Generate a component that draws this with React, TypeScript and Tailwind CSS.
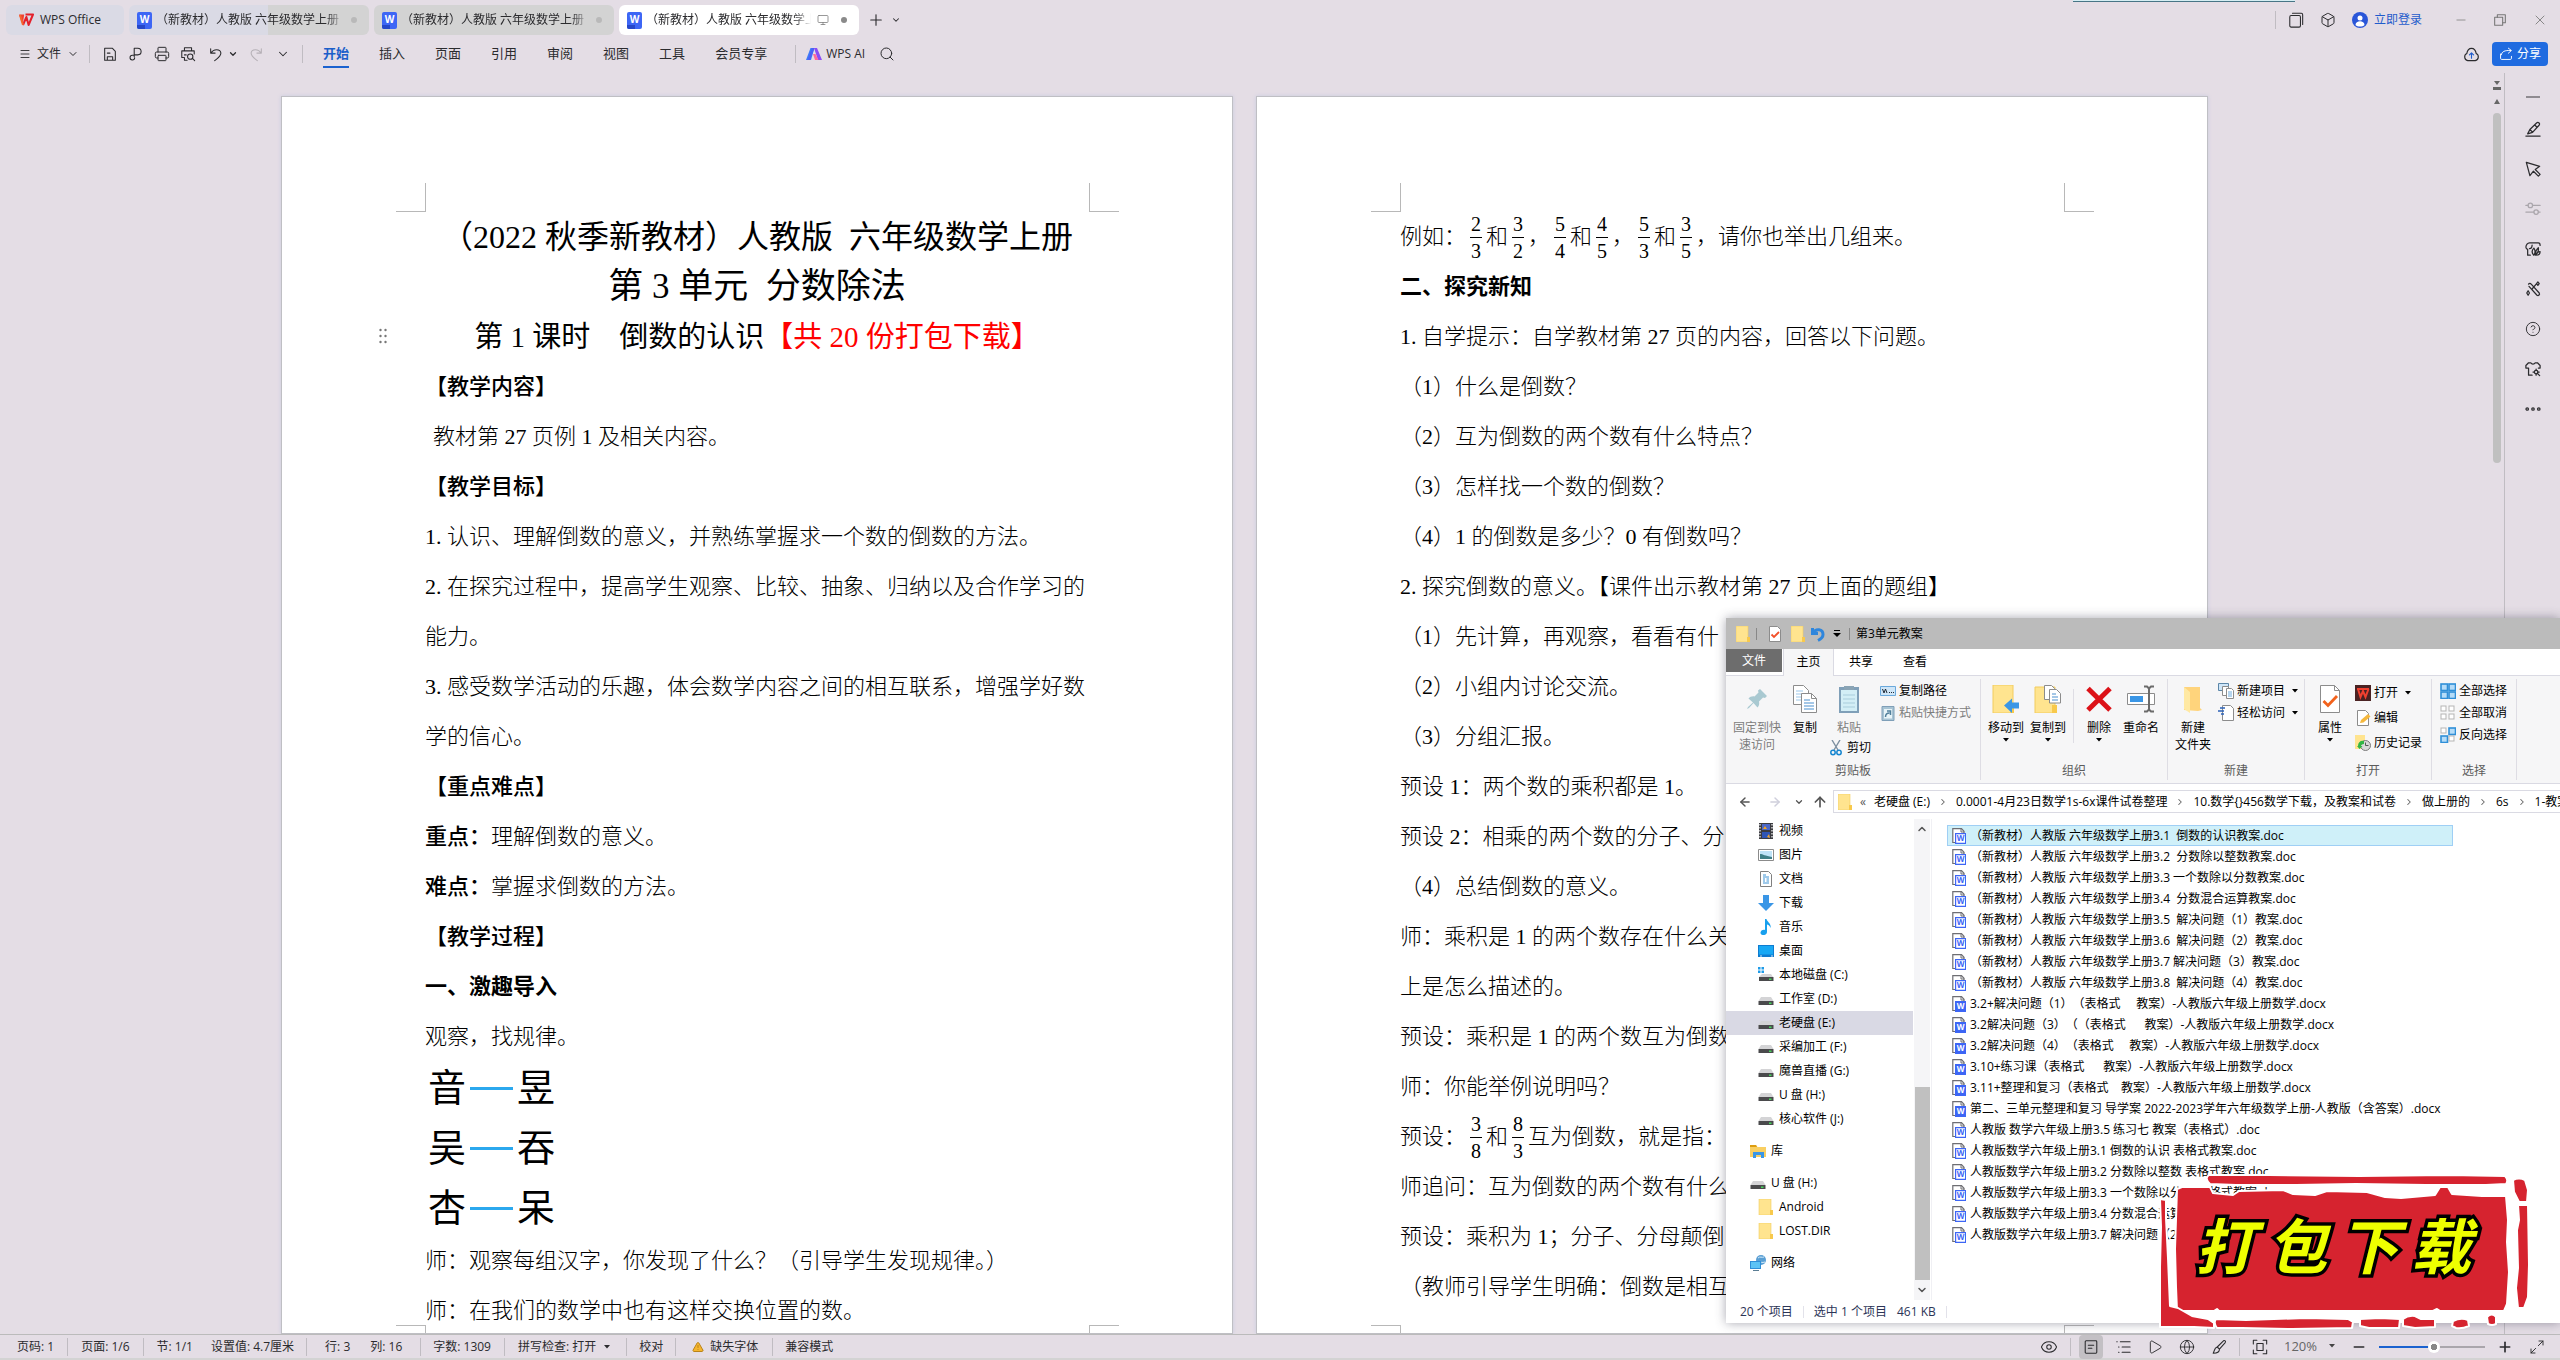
import { ComponentProps, ReactNode } from 'react'
import {
    ArrowLeft, ArrowRight, ArrowUp, Box, ChevronDown, ChevronRight, ChevronUp, CircleHelp, Eye,
    Globe, Maximize2, Menu, Minus, Monitor, Play, Plus, Printer, Search, TriangleAlert, X
} from 'lucide-react'

type IconProps = ComponentProps<'svg'>

/* ---------- WPS icons ---------- */

const WpsLogo = (props: IconProps) => <svg viewBox="0 0 16 14" fill="none" {...props}>
    <path d="M1 1.5h5.2L4.6 12 1 1.5Z" fill="#f0402f" />
    <path d="M5 12 8.4 4l2.2 8L15 1.5H7.5" stroke="#e3202b" strokeWidth="2" strokeLinejoin="round" />
    <path d="M2 2l3 10" stroke="#f6642e" strokeWidth="2" />
</svg>

const WordIcon = (props: IconProps) => <svg viewBox="0 0 15 17" {...props}>
    <rect width="15" height="17" rx="2" fill="#3d66f5" />
    <path d="M0 13h8v4H2a2 2 0 0 1-2-2z" fill="#2547c9" />
    <text x="7.5" y="11" textAnchor="middle" fontSize="10" fontWeight="700" fontFamily="Open Sans, sans-serif" fill="#fff">W</text>
</svg>

const Line = ({ children, ...props }: IconProps) => <svg viewBox="0 0 18 18" fill="none" stroke="currentColor" strokeWidth="1.2" strokeLinejoin="round" strokeLinecap="round" {...props}>{children}</svg>

const SaveIcon = (props: IconProps) => <Line {...props}><path d="M3 16V2.5h8.5L15 6v10zM6 16v-4h6v4M6 8h3" /></Line>
const ExportIcon = (props: IconProps) => <Line {...props}><path d="M7 12V2.5h4a3.7 3.7 0 0 1 0 7.5H7M7 10.5H5a2.6 2.6 0 1 0 2.5 2.7" /></Line>
const PreviewIcon = (props: IconProps) => <Line {...props}><path d="M5 5V2h8v3M4 13H2V5.5h14V9M5 13v3h3M5 10h2" /><circle cx="11.5" cy="12" r="3" /><path d="m14 14 2.5 2.5" /></Line>
const UndoLineIcon = (props: IconProps) => <Line {...props}><path d="M3 3v5h5M3.500 8C6 3 14 3 14.500 8c0 4-4 6-7 8.500" /></Line>
const RedoLineIcon = (props: IconProps) => <Line {...props}><path d="M15 3v5h-5M14.500 8C12 3 4 3 3.500 8c0 4 4 6 7 8.500" /></Line>
const WindowsIcon = (props: IconProps) => <Line {...props}><rect x="2" y="4" width="12" height="13" rx="1.5" /><path d="M5 1.5h10a1.5 1.5 0 0 1 1.5 1.5v11" /></Line>
const RestoreIcon = (props: IconProps) => <Line {...props}><rect x="3" y="6" width="9" height="9" /><path d="M6 6V3h9v9h-3" /></Line>
const CloudIcon = ({ children, ...props }: IconProps) => <Line {...props}><path d="M5 15.500a4 4 0 0 1-1-7.500c.5-3 2.500-5.500 5-5.500s4.500 2.500 5 5.500a4 4 0 0 1-1 7.500z" /><path d="M9 13V7.500M6.800 9.500 9 7.300l2.200 2.200" stroke="#1f5ccc" /></Line>
const ShareIcon = (props: IconProps) => <Line {...props}><path d="M2 9v5.5A1.5 1.5 0 0 0 3.500 16h11a1.500 1.500 0 0 0 1.500-1.500V12M3 10c.5-4 4-6 12-5.500M12 1.500l4 3-4 3.500" /></Line>
const PenIcon = (props: IconProps) => <Line {...props}><path d="M1 17h16M3 14.500l2.500-5L13 2.200a2 2 0 0 1 2.800 0 2 2 0 0 1 0 2.600l-7.300 8zM5.500 9.500l3 3M11 4.500l2.500 2.500" /></Line>
const CursorIcon = (props: IconProps) => <Line {...props}><path d="M1.500 1.500 16.500 6l-5 3.500L17 15l-2 2-5.500-5.500-4 5z" /></Line>
const SlidersIcon = (props: IconProps) => <Line {...props}><circle cx="6" cy="5" r="2.500" /><circle cx="12.500" cy="12.500" r="2.500" /><path d="M1 5h2.500M8.500 5H17M1 12.500h9M15 12.500h2" /></Line>
const StyleIcon = (props: IconProps) => <Line {...props}><path d="M3 16V9.500A3 3 0 0 1 1 7c0-2.500 2-5 4-5h10c1.500 0 2 1.500 2 3M3 16h3M8 4.500c0 2-1 4-3 4M10 16c-3-3-2-6 0-8 2 3 2 5 0 8ZM11.500 15.500c0-4 2-6.500 3.500-8 .5 4-.5 6.500-3.500 8ZM12 16c1-2.500 3-4 5-4 0 3-2 4-5 4Z" /></Line>
const WandIcon = (props: IconProps) => <Line {...props}><path d="M4 3.500a1.800 1.800 0 0 1 3 0l9 10a1.800 1.800 0 0 1-2.500 2.500l-9-10M8 9l5-6M14.500 1l1.500 2-1.500 2L13 3zM3.500 11 5 13.500 3.500 16 2 13.500z" /></Line>
const ShirtIcon = (props: IconProps) => <Line {...props}><path d="M4 16V8L1 8V5l3-3h2.500c1 2 4 2 5 0H14l3 3v3h-2M4 16h4" /><circle cx="12.500" cy="12.500" r="2" /><path d="M12.500 9v1.500M12.500 14.500V16M9 12.500h1.500M14.500 12.500H16M14 14l2.500 2.500" /></Line>
const DotsIcon = (props: IconProps) => <Line {...props}><circle cx="2.500" cy="9" r="1.400" /><circle cx="9" cy="9" r="1.400" /><circle cx="15.500" cy="9" r="1.400" /></Line>
const ReadIcon = (props: IconProps) => <Line {...props}><rect x="2.500" y="2" width="13" height="14" rx="1" /><path d="M6 7h6M6 10.500h4" /></Line>
const OutlineIcon = (props: IconProps) => <Line {...props}><path d="M2 3h.5M6 3h11M4 9h.5M8 9h9M4 15h.5M8 15h9" /></Line>
const FitIcon = (props: IconProps) => <Line {...props}><path d="M1.500 5.500v-4h4M12.500 1.500h4v4M16.500 12.500v4h-4M5.500 16.500h-4v-4" /><rect x="5.500" y="5" width="7" height="8" /></Line>
const BrushIcon = (props: IconProps) => <Line {...props}><path d="M7 9 14 2c1.500-1 3 .5 2 2l-6.500 7.500zM7 9l2.500 2.500c0 3-3 4.500-7 4.500C4 13 4 9.500 7 9Z" /></Line>

const AiLogo = (props: IconProps) => <svg viewBox="0 0 16 14" {...props}>
    <path d="M4.500 1h4L5 13H0z" fill="#3f7bf7" />
    <path d="M8.500 1 4 13H1.500L6 1z" fill="#4a62f7" />
    <path d="M8 1h3L16 13h-4z" fill="#8b4df5" />
    <path d="M7 7h2.500l3 6H9z" fill="#ff6a9b" />
</svg>

/* ---------- Explorer icons ---------- */

const FolderIcon = (props: IconProps) => <svg viewBox="0 0 14 16" {...props}>
    <path d="M0 0h12v16H0z" fill="#ffe48f" stroke="#f2cc5f" strokeWidth=".6" />
    <path d="M11 11h3v5h-3z" fill="#f8c94c" />
</svg>

const DriveIcon = (props: IconProps) => <svg viewBox="0 0 16 16" {...props}>
    <path d="M3 6h10l2.500 4H.5z" fill="#d4d4d6" />
    <path d="M.5 10h15v4H.5z" fill="#4a4a4c" />
    <path d="M11 11.500h2.500V13H11z" fill="#45d65a" />
</svg>

const SystemDriveIcon = (props: IconProps) => <svg viewBox="0 0 16 16" {...props}>
    <path d="M0 0h2.500v2.500H0zM3.500 0H6v2.500H3.500zM0 3.500h2.500V6H0zM3.500 3.500H6V6H3.500z" fill="#1e9be8" />
    <path d="M4 7h9l2 3H1z" fill="#d4d4d6" />
    <path d="M1 10h14.500v4H1z" fill="#4a4a4c" />
    <path d="M11 11.500h2.500V13H11z" fill="#45d65a" />
</svg>

const VideoIcon = (props: IconProps) => <svg viewBox="0 0 16 16" {...props}>
    <path d="M1 0h14v16H1z" fill="#3b3b40" />
    <path d="M4 1h8v6H4z" fill="#4b68c8" /><path d="M4 9h8v6H4z" fill="#2f55b5" />
    <path d="m5 6 2-3 2 3zM9 14l2-3 1 4z" fill="#f5a623" />
    <path d="M2 1v14M14 1v14" stroke="#fff" strokeWidth="1.200" strokeDasharray="1.500 1.500" />
</svg>

const PictureIcon = (props: IconProps) => <svg viewBox="0 0 16 16" {...props}>
    <path d="M.5 2.500h15v11H.5z" fill="#fff" stroke="#8b8b8b" />
    <path d="M2 4h12v8H2z" fill="#bfe3f8" /><path d="M2 7c3 0 5 2 12 3v2H2z" fill="#3f7f88" />
</svg>

const DocumentIcon = (props: IconProps) => <svg viewBox="0 0 16 16" {...props}>
    <path d="M2.500.5h8l3 3v12h-11z" fill="#fff" stroke="#808080" />
    <path d="M5 4h3M5 6h6M5 8h2M8.500 8H11M5 10h2M8.500 10H11M5 12h6" stroke="#3e94d6" />
</svg>

const DownloadIcon = (props: IconProps) => <svg viewBox="0 0 16 16" {...props}><path d="M5 0h6v8h5l-8 8-8-8h5z" fill="#3a96e6" /></svg>

const MusicIcon = (props: IconProps) => <svg viewBox="0 0 16 16" {...props}>
    <path d="M7 0h1.500c.5 3 5 4 4 9-1-3-2.500-3.500-3.500-3.500V13c0 4-7 4-6.500.5C3 11 5.500 10.500 7 11z" fill="#18a0ee" />
</svg>

const DesktopIcon = (props: IconProps) => <svg viewBox="0 0 16 16" {...props}>
    <path d="M0 2h16v12H0z" fill="#0f7cd0" /><path d="M1 3h14v8.500H1z" fill="#18a8f4" /><path d="M2 13h2M13 13h2" stroke="#fff" strokeWidth=".8" />
</svg>

const LibraryIcon = (props: IconProps) => <svg viewBox="0 0 16 16" {...props}>
    <path d="M0 2h6l1.500 2H16v10H0z" fill="#f9cf62" /><path d="M0 2h6l1 2H0z" fill="#dd9d10" />
    <path d="M3 15V9h11v6h-3v-3H6v3z" fill="#3a96e6" />
</svg>

const NetworkIcon = (props: IconProps) => <svg viewBox="0 0 16 16" {...props}>
    <circle cx="11" cy="5" r="5" fill="#5a9fd4" /><path d="M8 3c2-2 4 0 6-1M9 7c2 0 3 1 6 0" stroke="#d5ecf9" fill="none" />
    <path d="M0 6h11v8H0z" fill="#2f8fd8" /><path d="M1 7h9v6H1z" fill="#5cc3f5" /><path d="M3 15.500h6" stroke="#5a7d94" />
</svg>

const FileIcon = ({ solid, ...props }: IconProps & { solid?: boolean }) => <svg viewBox="0 0 14 16" {...props}>
    <path d="M3 14.500H.8V.6h8.700L12 3.300V5" fill="#fff" stroke="#6e6e73" strokeWidth="1.200" />
    <path d="M9 .6V4h3.200" fill="none" stroke="#6e6e73" />
    <path d="M3.600 5.600h10v9.800h-10z" fill={solid ? '#3d66f5' : '#fff'} stroke="#3d66f5" strokeWidth="1.200" />
    <text x="8.600" y="13.200" textAnchor="middle" fontSize="8" fontWeight="700" fontFamily="Open Sans, sans-serif" fill={solid ? '#fff' : '#3d66f5'}>W</text>
</svg>

const PinIcon = (props: IconProps) => <svg viewBox="0 0 28 28" {...props}>
    <path d="m17 4 7 7-2 2-2-.5-4 4c.5 3 0 4.500-1.500 6l-4-4.500L6 23l-2 1 1-2 5-4.500-4.500-4C7 12 9 11 11.500 11.500l4-4-.5-2z" fill="#a9c9d1" />
</svg>

const CopyIcon = (props: IconProps) => <svg viewBox="0 0 28 28" {...props}>
    <path d="M2.500.5h10l5 5v14h-15z" fill="#fff" stroke="#8c8c8c" />
    <path d="M5 6h7M5 9h9M5 12h5M5 15h5" stroke="#9cc7ea" />
    <path d="M10.500 8.500h10l5 5v14h-15z" fill="#fff" stroke="#8c8c8c" /><path d="M20.500 8.500v5h5" fill="none" stroke="#8c8c8c" />
    <path d="M13 15h6M13 18h10M13 21h10M13 24h10" stroke="#4a90cf" />
</svg>

const PasteIcon = (props: IconProps) => <svg viewBox="0 0 28 28" {...props}>
    <path d="M4 2h20v26H4z" fill="#7f9fb8" /><path d="M6 5h16v21H6z" fill="#d3eef6" />
    <path d="M8 10h12M8 14h12M8 18h12M8 22h12" stroke="#a9cddc" /><path d="M9 1h10v4H9z" fill="#8aa4b5" />
</svg>

const PathIcon = (props: IconProps) => <svg viewBox="0 0 16 16" {...props}>
    <path d="M.5 3.500h15v9H.5z" fill="#cfe6f8" stroke="#6aa9dc" />
    <path d="m2.500 6 1.500 4L5.500 6 7 10M9 9.500h1M11 9.500h1M13 9.500h1" fill="none" stroke="#1f2a36" />
</svg>

const ShortcutIcon = (props: IconProps) => <svg viewBox="0 0 16 16" {...props}>
    <path d="M2 1.500h12V15.500H2z" fill="#a8c4d4" stroke="#7f9fb8" /><path d="M4 4h8v9.500H4z" fill="#e8f4f8" />
    <path d="M5.500 12c0-3 1-4 4-4M7 6h3.500v4" fill="none" stroke="#52809c" strokeWidth="1.500" />
</svg>

const CutIcon = (props: IconProps) => <svg viewBox="0 0 12 16" fill="none" {...props}>
    <path d="M2 0l6 10M10 0 4 10" stroke="#7c8fa0" strokeWidth="1.400" />
    <circle cx="3" cy="12.500" r="2.200" stroke="#1686d0" strokeWidth="1.500" /><circle cx="9" cy="12.500" r="2.200" stroke="#1686d0" strokeWidth="1.500" />
</svg>

const MoveToIcon = (props: IconProps) => <svg viewBox="0 0 28 28" {...props}>
    <path d="M1 0h20v28H1z" fill="#ffe48f" stroke="#f2cc5f" /><path d="M18 20h4v8h-4z" fill="#f8c94c" />
    <path d="M27 17.500v6h-7V28l-8-7.500 8-7v4z" fill="#3a96e6" />
</svg>

const CopyToIcon = (props: IconProps) => <svg viewBox="0 0 28 28" {...props}>
    <path d="M1 2h20v26H1z" fill="#ffe48f" stroke="#f2cc5f" /><path d="M18 20h5v8h-5z" fill="#f8c94c" />
    <path d="M10.500.5h7l3 3v11h-10z" fill="#fff" stroke="#8c8c8c" /><path d="M15.500 4.500h7l4 4v9.500h-11z" fill="#fff" stroke="#8c8c8c" />
    <path d="M18 9h4M18 12h6M18 15h6" stroke="#4a90cf" />
</svg>

const DeleteIcon = (props: IconProps) => <svg viewBox="0 0 28 28" {...props}><path d="M3 3.500 25 25M25 3.500 3 25" stroke="#dc1218" strokeWidth="5" /></svg>

const RenameIcon = (props: IconProps) => <svg viewBox="0 0 28 28" fill="none" {...props}>
    <path d="M.5 8.500h27v11H.5z" fill="#fff" stroke="#8c8c8c" /><path d="M3 11h13v6H3z" fill="#3a96e6" />
    <path d="M17 1.500h3l2 2 2-2h3M17 26.500h3l2-2 2 2h3M22 3v22" stroke="#6b6b6b" strokeWidth="2" />
</svg>

const NewFolderIcon = (props: IconProps) => <svg viewBox="0 0 28 28" {...props}>
    <path d="M5 2h16v21l2 2-4 1-14-1z" fill="#ffd47c" /><path d="m5 2 6 5v21l-6-4z" fill="#ffe9a3" />
</svg>

const NewItemIcon = (props: IconProps) => <svg viewBox="0 0 16 16" {...props}>
    <path d="M.5.5h10v7H.5z" fill="#cfe6f8" stroke="#5b86a8" /><path d="M4.500 3.500h6v9h-6z" fill="#fff" stroke="#8c8c8c" />
    <path d="M8.500 5.500h5l2 2v8h-7z" fill="#fff" stroke="#8c8c8c" /><path d="M10 9h4M10 11h4M10 13h4" stroke="#6aa9dc" />
</svg>

const EasyAccessIcon = (props: IconProps) => <svg viewBox="0 0 16 16" {...props}>
    <path d="M4.500.5h8l3 3v12h-11z" fill="#fff" stroke="#8c8c8c" /><path d="M2 3h5M0 6h6M3 9h3" stroke="#2b62b8" strokeWidth="1.500" />
</svg>

const PropertiesIcon = (props: IconProps) => <svg viewBox="0 0 28 28" {...props}>
    <path d="M4.500.5h14l5 5v22h-19z" fill="#fff" stroke="#8c8c8c" /><path d="M18.500.5v5h5" fill="none" stroke="#8c8c8c" />
    <path d="m7.500 16 4.500 4.500 9-9.500" fill="none" stroke="#f2621c" strokeWidth="2.800" />
</svg>

const OpenWpsIcon = (props: IconProps) => <svg viewBox="0 0 16 16" {...props}>
    <path d="M0 0h16v16H0z" fill="#4b2323" /><path d="M2 4h12M3 4l2.500 8L8 6l2.500 6L13.500 4" fill="none" stroke="#f0402f" strokeWidth="2" />
</svg>

const EditIcon = (props: IconProps) => <svg viewBox="0 0 16 16" {...props}>
    <path d="M2.500.5h8l3 3v12h-11z" fill="#fff" stroke="#8c8c8c" /><path d="m5 13 1-3 7-6 2.500 2.500-7 6z" fill="#f5b83d" />
</svg>

const HistoryIcon = (props: IconProps) => <svg viewBox="0 0 16 16" {...props}>
    <path d="M0 0h10v14H0z" fill="#ffe48f" /><circle cx="10.500" cy="10.500" r="5" fill="#d9d9d9" stroke="#7a7a7a" />
    <path d="M10.500 7.500v3h3" fill="none" stroke="#555" /><path d="M3 11c0-4 3-6 6-5v3c-2 0-3 1-3 2h1.500L4.500 14 2 11z" fill="#31b545" />
</svg>

const Squares = ({ filled, ...props }: IconProps & { filled: boolean[] }) => <svg viewBox="0 0 16 16" {...props}>
    {filled.map((on, i) => <rect key={i} x={(i % 2) * 8 + 1} y={Math.floor(i / 2) * 8 + 1} width={on ? 6.5 : 5} height={on ? 6.5 : 5} fill={on ? '#b5dcf8' : '#fff'} stroke={on ? '#2f8fd8' : '#b5b5b5'} strokeWidth={on ? 1.6 : 1} />)}
</svg>
const SelectAllIcon = (props: IconProps) => <Squares filled={[true, true, true, true]} {...props} />
const SelectNoneIcon = (props: IconProps) => <Squares filled={[false, false, false, false]} {...props} />
const InvertIcon = (props: IconProps) => <Squares filled={[false, true, true, false]} {...props} />

const CheckFileIcon = (props: IconProps) => <svg viewBox="0 0 12 16" {...props}>
    <path d="M.5.5h8l3 3v12H.5z" fill="#fff" stroke="#8c8c8c" /><path d="m2.500 8.500 2.500 2.500 5-5" fill="none" stroke="#f2512a" strokeWidth="1.800" />
</svg>

const UndoIcon = (props: IconProps) => <svg viewBox="0 0 14 16" {...props}>
    <path d="M1.500 2v5.500H7M2 7c3-5 10-4 10 1.500 0 3-2 4.500-5 6" fill="none" stroke="#2f86dc" strokeWidth="3" />
</svg>

const Caret = ({ className = '' }: { className?: string }) => <svg viewBox="0 0 6 4" className={`h-1 w-1.5 flex-none ${className}`}><path d="M0 0h6L3 3.500z" fill="currentColor" /></svg>

/* ---------- WPS window ---------- */

const menus = ['开始', '插入', '页面', '引用', '审阅', '视图', '工具', '会员专享']

const Divider = ({ className = '' }: { className?: string }) => <span className={`h-[18px] w-px flex-none bg-[#c0bcc2] ${className}`} />

function DocTab({ className, active }: { className: string, active?: boolean }) {
    return (
        <button className={`flex h-[30px] w-60 items-center rounded-md pl-2 pr-3 ${className}`}>
            <WordIcon className="h-[17px] w-[15px] flex-none" />
            <span className="ml-1 flex-1 overflow-hidden text-left whitespace-nowrap mask-r-from-90% mask-r-to-100%">（新教材）人教版 六年级数学上册</span>
            {active && <Monitor className="mr-3 ml-1.5 w-3 flex-none text-[#777]" strokeWidth={1.5} />}
            <span className={active ? 'h-1.5 w-1.5 rounded-full bg-[#8a8a8a]' : 'ml-1.5 h-1.5 w-1.5 rounded-full bg-[#b9b9b9]'} />
        </button>
    )
}

function TitleBar() {
    return (
        <div className="relative flex h-10 items-center pl-1.5 pr-3">
            <button className="flex h-[30px] w-[118px] items-center gap-1.5 rounded-md bg-[#dadae5] pl-3">
                <WpsLogo className="h-3.5 w-4" />WPS Office
            </button>
            <div className="ml-[5px] flex gap-[5px]">
                <DocTab className="bg-[linear-gradient(90deg,#dadae5_58%,#d3d3d3_58%)]" />
                <DocTab className="bg-[#d3d3d3]" />
                <DocTab className="bg-white" active />
            </div>
            <button aria-label="新建标签" className="ml-2"><Plus className="w-[18px]" strokeWidth={1.5} /></button>
            <button aria-label="标签列表" className="ml-1.5"><ChevronDown className="w-2.5" strokeWidth={2.5} /></button>

            <div className="absolute top-0 right-[265px] h-0.5 w-[222px] border-b border-[#477586] bg-[#d5eef3]" />

            <div className="ml-auto flex items-center">
                <Divider className="mr-3" />
                <button aria-label="窗口管理"><WindowsIcon className="h-4 w-4" /></button>
                <button aria-label="应用" className="ml-4"><Box className="h-4 w-4" strokeWidth={1.5} /></button>
                <a href="#login" className="ml-4 flex items-center gap-1.5 text-[#1f5ccc]">
                    <svg viewBox="0 0 16 16" className="h-4 w-4"><circle cx="8" cy="8" r="8" fill="#2a56d8" /><circle cx="8" cy="6" r="2.500" fill="#fff" /><path d="M3.500 13c0-5 9-5 9 0-2 2-7 2-9 0Z" fill="#fff" /></svg>
                    立即登录
                </a>
                <button aria-label="最小化" className="ml-8 text-[#888]"><Minus className="w-3.5" strokeWidth={1.5} /></button>
                <button aria-label="还原" className="ml-6 text-[#777]"><RestoreIcon className="h-4 w-4" /></button>
                <button aria-label="关闭" className="ml-6 text-[#888]"><X className="w-4" strokeWidth={1.5} /></button>
            </div>
        </div>
    )
}

function MenuBar() {
    return (
        <div className="flex h-[33px] items-center pb-[5px] pl-[19px] pr-3">
            <button className="flex items-center"><Menu className="mr-1.5 w-3" strokeWidth={1.8} />文件<ChevronDown className="ml-1.5 w-3" /></button>
            <Divider className="ml-2.5" />
            <div className="ml-3 flex items-center gap-2.5">
                <button aria-label="保存"><SaveIcon className="h-4 w-4" /></button>
                <button aria-label="输出"><ExportIcon className="h-4 w-4" /></button>
                <button aria-label="打印"><Printer className="h-4 w-4" strokeWidth={1.5} /></button>
                <button aria-label="打印预览"><PreviewIcon className="h-4 w-4" /></button>
                <button aria-label="撤销" className="ml-0.5 flex items-center gap-1"><UndoLineIcon className="h-4 w-4" /><ChevronDown className="w-2.5" strokeWidth={3} /></button>
                <button aria-label="恢复" className="text-[#b5b0b6]"><RedoLineIcon className="h-4 w-4" /></button>
                <button aria-label="更多" className="ml-0.5"><ChevronDown className="w-3.5" strokeWidth={1.8} /></button>
            </div>
            <Divider className="ml-3" />
            <nav className="ml-5 flex gap-[30px] text-[13px]">
                {menus.map((name, i) => <button key={name} className={i === 0 ? 'h-7 border-b-2 border-[#1b62cf] pt-0.5 font-bold text-[#1b5fca]' : 'h-7 border-b-2 border-transparent pt-0.5'}>{name}</button>)}
            </nav>
            <Divider className="ml-7" />
            <button className="ml-2.5 flex items-center gap-1"><AiLogo className="h-3.5 w-4" />WPS AI</button>
            <button aria-label="搜索" className="ml-3.5"><Search className="h-4 w-4" strokeWidth={1.5} /></button>

            <button aria-label="云同步" className="ml-auto"><CloudIcon className="h-[17px] w-[17px]" /></button>
            <button className="ml-3 flex h-6 w-14 items-center justify-center gap-1 rounded bg-[#1f6be0] text-white"><ShareIcon className="h-3.5 w-3.5" />分享</button>
        </div>
    )
}

function Frac({ top, bottom }: { top: number, bottom: number }) {
    return (
        <span className="mx-1 inline-flex w-3 flex-col text-center text-xl leading-[26px] font-normal">
            <span className="border-b border-black">{top}</span>
            <span>{bottom}</span>
        </span>
    )
}

const Head = ({ children }: { children: ReactNode }) => <h3 className="font-medium">{children}</h3>

function Page({ children }: { children: ReactNode }) {
    return (
        <article className="relative w-[952px] flex-none border border-[#bfbfc4] bg-white px-[143px] pt-[115px] text-[22px] leading-[50px] whitespace-pre text-black shadow-[0_0_4px_#c9cbe0]">
            <span className="absolute top-[86px] left-[114px] h-[29px] w-[30px] border-r border-b border-[#b8b8b8]" />
            <span className="absolute top-[86px] right-[113px] h-[29px] w-[30px] border-b border-l border-[#b8b8b8]" />
            <span className="absolute bottom-0 left-[114px] h-2 w-[30px] border-t border-r border-[#b8b8b8]" />
            <span className="absolute right-[113px] bottom-0 h-2 w-[30px] border-t border-l border-[#b8b8b8]" />
            {children}
        </article>
    )
}

const pairs = [['音', '昱'], ['吴', '吞'], ['杏', '呆']]

function Documents() {
    return (
        <main className="flex flex-1 justify-center gap-[23px] overflow-hidden pt-[23px] font-['Liberation_Serif','Noto_Sans_CJK_SC',serif] font-light">
            <Page>
                <h1 className="text-center text-[32px] font-normal">（2022 秋季新教材）人教版  六年级数学上册</h1>
                <h1 className="text-center text-[35px] font-normal">第 3 单元  分数除法</h1>
                <div className="relative">
                    <svg viewBox="0 0 8 16" className="absolute top-4 -left-[46px] h-4 w-2" fill="#777">
                        <circle cx="1.500" cy="2" r="1.200" /><circle cx="6.500" cy="2" r="1.200" /><circle cx="1.500" cy="8" r="1.200" /><circle cx="6.500" cy="8" r="1.200" /><circle cx="1.500" cy="14" r="1.200" /><circle cx="6.500" cy="14" r="1.200" />
                    </svg>
                    <h2 className="text-center text-[29px] font-normal">第 1 课时　倒数的认识<span className="text-[#ff0000]">【共 20 份打包下载】</span></h2>
                </div>
                <Head>【教学内容】</Head>
                <p className="pl-2">教材第 27 页例 1 及相关内容。</p>
                <Head>【教学目标】</Head>
                <p>1. 认识、理解倒数的意义，并熟练掌握求一个数的倒数的方法。</p>
                <p>2. 在探究过程中，提高学生观察、比较、抽象、归纳以及合作学习的</p>
                <p>能力。</p>
                <p>3. 感受数学活动的乐趣，体会数学内容之间的相互联系，增强学好数</p>
                <p>学的信心。</p>
                <Head>【重点难点】</Head>
                <p><b className="font-medium">重点：</b>理解倒数的意义。</p>
                <p><b className="font-medium">难点：</b>掌握求倒数的方法。</p>
                <Head>【教学过程】</Head>
                <h3 className="font-bold">一、激趣导入</h3>
                <p>观察，找规律。</p>
                <div className="-mt-1 -mb-0.5 pl-[3px] text-[38px] leading-[60px] font-normal">
                    {pairs.map(([a, b]) => <div key={a} className="flex items-center gap-1">{a}<span className="h-[3px] w-[43px] bg-[#2ba8ee]" />{b}</div>)}
                </div>
                <p>师：观察每组汉字，你发现了什么？（引导学生发现规律。）</p>
                <p>师：在我们的数学中也有这样交换位置的数。</p>
            </Page>
            <Page>
                <p className="flex h-[50px] items-center">例如：<Frac top={2} bottom={3} />和<Frac top={3} bottom={2} />，<Frac top={5} bottom={4} />和<Frac top={4} bottom={5} />，<Frac top={5} bottom={3} />和<Frac top={3} bottom={5} />，请你也举出几组来。</p>
                <h3 className="font-bold">二、探究新知</h3>
                <p>1. 自学提示：自学教材第 27 页的内容，回答以下问题。</p>
                <p>（1）什么是倒数？</p>
                <p>（2）互为倒数的两个数有什么特点？</p>
                <p>（3）怎样找一个数的倒数？</p>
                <p>（4）1 的倒数是多少？0 有倒数吗？</p>
                <p>2. 探究倒数的意义。【课件出示教材第 27 页上面的题组】</p>
                <p>（1）先计算，再观察，看看有什</p>
                <p>（2）小组内讨论交流。</p>
                <p>（3）分组汇报。</p>
                <p>预设 1：两个数的乘积都是 1。</p>
                <p>预设 2：相乘的两个数的分子、分</p>
                <p>（4）总结倒数的意义。</p>
                <p>师：乘积是 1 的两个数存在什么关</p>
                <p>上是怎么描述的。</p>
                <p>预设：乘积是 1 的两个数互为倒数</p>
                <p>师：你能举例说明吗？</p>
                <p className="flex h-[50px] items-center">预设：<Frac top={3} bottom={8} />和<Frac top={8} bottom={3} />互为倒数，就是指：</p>
                <p>师追问：互为倒数的两个数有什么</p>
                <p>预设：乘积为 1；分子、分母颠倒</p>
                <p>（教师引导学生明确：倒数是相互</p>
            </Page>
        </main>
    )
}

const sideTools = [
    { name: '批注', icon: PenIcon },
    { name: '选择', icon: CursorIcon },
    { name: '设置', icon: SlidersIcon },
    { name: '样式', icon: StyleIcon },
    { name: '智能排版', icon: WandIcon },
    { name: '帮助', icon: CircleHelp },
    { name: '皮肤', icon: ShirtIcon },
    { name: '更多', icon: DotsIcon },
]

function SideTools() {
    return (
        <>
            <div className="flex w-[15px] flex-none flex-col items-center pt-2 text-[#666]">
                <svg viewBox="0 0 8 10" className="h-2.5 w-2"><path d="M1 0h6L4 4zM0 6h8v3H0z" fill="currentColor" /></svg>
                <svg viewBox="0 0 6 5" className="mt-2 h-[5px] w-1.5"><path d="M3 0l3 5H0z" fill="currentColor" /></svg>
                <div className="mt-[9px] h-[350px] w-2 rounded-full bg-[#c0c0c0]" />
            </div>
            <aside className="flex w-14 flex-none flex-col items-center gap-6 border-l border-[#c0bcc2] pt-4">
                <button aria-label="收起" className="-mb-2 flex h-4 items-center"><span className="h-0.5 w-3.5 bg-[#8f8b91]" /></button>
                {sideTools.map(tool => <button key={tool.name} aria-label={tool.name} className={tool.name === '设置' ? 'text-[#aaa6ac]' : ''}><tool.icon className="h-4 w-4" strokeWidth={1.4} /></button>)}
            </aside>
        </>
    )
}

function StatusBar() {
    return (
        <footer className="flex h-[26px] flex-none items-center border-t border-b-2 border-t-[#bbb] border-b-[#d3d3d3] pl-[17px] pr-[15px]">
            <span>页码: 1</span><Divider className="mx-[13px]" />
            <span>页面: 1/6</span><Divider className="mx-[13px]" />
            <span>节: 1/1</span><span className="ml-[18px]">设置值: 4.7厘米</span><Divider className="mr-[18px] ml-3" />
            <span>行: 3</span><span className="ml-5">列: 16</span><Divider className="mr-3 ml-[18px]" />
            <span>字数: 1309</span><Divider className="mx-[13px]" />
            <button className="flex items-center">拼写检查: 打开<Caret className="ml-2" /></button><Divider className="mr-3 ml-4" />
            <button>校对</button><Divider className="mr-4 ml-3" />
            <button className="flex items-center gap-1.5"><TriangleAlert className="w-3 fill-[#f5b52e] text-[#b9831a]" />缺失字体</button><Divider className="mr-3 ml-3.5" />
            <span>兼容模式</span>

            <div className="ml-auto flex items-center">
                <button aria-label="护眼模式"><Eye className="h-[18px] w-[18px]" strokeWidth={1.4} /></button><Divider className="ml-3" />
                <button aria-label="页面视图" className="ml-2 flex h-6 w-6 items-center justify-center rounded bg-[#c3c0c4]"><ReadIcon className="h-4 w-4" /></button>
                <button aria-label="大纲" className="ml-3"><OutlineIcon className="h-4 w-4" /></button>
                <button aria-label="阅读" className="ml-4"><Play className="h-4 w-4" strokeWidth={1.4} /></button>
                <button aria-label="网页" className="ml-4"><Globe className="h-4 w-4" strokeWidth={1.4} /></button>
                <button aria-label="写作" className="ml-4"><BrushIcon className="h-4 w-4" /></button>
                <Divider className="ml-3" />
                <button aria-label="适应页面" className="ml-3"><FitIcon className="h-4 w-4" /></button>
                <button className="ml-4 flex items-center text-[13px] text-[#666]">120%<Caret className="ml-3 text-[#444]" /></button>
                <button aria-label="缩小" className="ml-4"><Minus className="w-4" strokeWidth={2.5} /></button>
                <input type="range" aria-label="缩放" defaultValue={52} className="mx-3 h-0.5 w-[106px] appearance-none bg-[linear-gradient(90deg,#1b62cf_52%,#aaa6ac_52%)] [&::-webkit-slider-thumb]:h-3 [&::-webkit-slider-thumb]:w-3 [&::-webkit-slider-thumb]:appearance-none [&::-webkit-slider-thumb]:rounded-full [&::-webkit-slider-thumb]:bg-[radial-gradient(#888_35%,#fff_40%)]" />
                <button aria-label="放大"><Plus className="w-4" strokeWidth={2.5} /></button>
                <button aria-label="全屏" className="ml-4"><Maximize2 className="h-4 w-4" strokeWidth={1.4} /></button>
            </div>
        </footer>
    )
}

/* ---------- Explorer window ---------- */

type Tool = { name: string, icon: (props: IconProps) => ReactNode, caret?: boolean, muted?: boolean }

function BigTool({ name, icon: Icon, caret, muted, className = 'w-[42px]' }: Tool & { className?: string }) {
    return (
        <button className={`flex flex-none flex-col items-center self-start leading-[17px] whitespace-pre ${muted ? 'text-[#7d7d7d]' : ''} ${className}`}>
            <Icon className="mb-1.5 h-7 w-7" />
            {name}
            {caret && <Caret className="mt-0.5" />}
        </button>
    )
}

function SmallTool({ name, icon: Icon, caret, muted }: Tool) {
    return (
        <button className={`flex items-center gap-[3px] leading-4 whitespace-nowrap ${muted ? 'text-[#7d7d7d]' : ''}`}>
            <Icon className="h-4 w-4 flex-none" />{name}{caret && <Caret className="ml-1" />}
        </button>
    )
}

function Group({ name, className, children }: { name: string, className: string, children: ReactNode }) {
    return (
        <section className={`my-[3px] flex flex-none flex-col border-r border-[#dedde4] pt-1.5 ${className}`}>
            <div className="flex flex-1 pl-1">{children}</div>
            <div className="text-center leading-[18px] text-[#5c5c5c]">{name}</div>
        </section>
    )
}

function Ribbon() {
    return (
        <div className="flex h-[109px] border-y border-[#dadae3] bg-[#f6f6f7]">
            <Group name="剪贴板" className="w-[255px]">
                <BigTool name={'固定到快\n速访问'} icon={PinIcon} muted className="w-[54px]" />
                <BigTool name="复制" icon={CopyIcon} />
                <div className="flex w-[52px] flex-none flex-col gap-1 pl-0.5">
                    <BigTool name="粘贴" icon={PasteIcon} muted />
                    <SmallTool name="剪切" icon={CutIcon} />
                </div>
                <div className="-mt-0.5 flex flex-col gap-1.5 pl-0.5">
                    <SmallTool name="复制路径" icon={PathIcon} />
                    <SmallTool name="粘贴快捷方式" icon={ShortcutIcon} muted />
                </div>
            </Group>
            <Group name="组织" className="w-[187px]">
                <BigTool name="移动到" icon={MoveToIcon} caret />
                <BigTool name="复制到" icon={CopyToIcon} caret />
                <Divider className="mx-1 mt-1 h-[54px] bg-[#dedde4]" />
                <BigTool name="删除" icon={DeleteIcon} caret />
                <BigTool name="重命名" icon={RenameIcon} />
            </Group>
            <Group name="新建" className="w-[137px]">
                <BigTool name={'新建\n文件夹'} icon={NewFolderIcon} />
                <div className="-mt-0.5 flex flex-col gap-1.5 pl-1">
                    <SmallTool name="新建项目" icon={NewItemIcon} caret />
                    <SmallTool name="轻松访问" icon={EasyAccessIcon} caret />
                </div>
            </Group>
            <Group name="打开" className="w-[127px]">
                <BigTool name="属性" icon={PropertiesIcon} caret />
                <div className="flex flex-col gap-[9px] pl-1">
                    <SmallTool name="打开" icon={OpenWpsIcon} caret />
                    <SmallTool name="编辑" icon={EditIcon} />
                    <SmallTool name="历史记录" icon={HistoryIcon} />
                </div>
            </Group>
            <Group name="选择" className="w-[85px]">
                <div className="-mt-0.5 flex flex-col gap-1.5 pl-1">
                    <SmallTool name="全部选择" icon={SelectAllIcon} />
                    <SmallTool name="全部取消" icon={SelectNoneIcon} />
                    <SmallTool name="反向选择" icon={InvertIcon} />
                </div>
            </Group>
        </div>
    )
}

const crumbs = ['老硬盘 (E:)', '0.0001-4月23日数学1s-6x课件试卷整理', '10.数学{}456数学下载，及教案和试卷', '做上册的', '6s', '1-教案']

const places = [
    { name: '视频', icon: VideoIcon },
    { name: '图片', icon: PictureIcon },
    { name: '文档', icon: DocumentIcon },
    { name: '下载', icon: DownloadIcon },
    { name: '音乐', icon: MusicIcon },
    { name: '桌面', icon: DesktopIcon },
    { name: '本地磁盘 (C:)', icon: SystemDriveIcon },
    { name: '工作室 (D:)', icon: DriveIcon },
    { name: '老硬盘 (E:)', icon: DriveIcon, selected: true },
    { name: '采编加工 (F:)', icon: DriveIcon },
    { name: '魔兽直播 (G:)', icon: DriveIcon },
    { name: 'U 盘 (H:)', icon: DriveIcon },
    { name: '核心软件 (J:)', icon: DriveIcon },
    { name: '库', icon: LibraryIcon, root: true },
    { name: 'U 盘 (H:)', icon: DriveIcon, root: true },
    { name: 'Android', icon: FolderIcon },
    { name: 'LOST.DIR', icon: FolderIcon },
    { name: '网络', icon: NetworkIcon, root: true },
]

const files = [
    '（新教材）人教版 六年级数学上册3.1  倒数的认识教案.doc',
    '（新教材）人教版 六年级数学上册3.2  分数除以整数教案.doc',
    '（新教材）人教版 六年级数学上册3.3 一个数除以分数教案.doc',
    '（新教材）人教版 六年级数学上册3.4  分数混合运算教案.doc',
    '（新教材）人教版 六年级数学上册3.5  解决问题（1）教案.doc',
    '（新教材）人教版 六年级数学上册3.6  解决问题（2）教案.doc',
    '（新教材）人教版 六年级数学上册3.7 解决问题（3）教案.doc',
    '（新教材）人教版 六年级数学上册3.8  解决问题（4）教案.doc',
    '3.2+解决问题（1）（表格式     教案）-人教版六年级上册数学.docx',
    '3.2解决问题（3）（（表格式      教案）-人教版六年级上册数学.docx',
    '3.2解决问题（4）（表格式     教案）-人教版六年级上册数学.docx',
    '3.10+练习课（表格式      教案）-人教版六年级上册数学.docx',
    '3.11+整理和复习（表格式    教案）-人教版六年级上册数学.docx',
    '第二、三单元整理和复习 导学案 2022-2023学年六年级数学上册-人教版（含答案）.docx',
    '人教版 数学六年级上册3.5 练习七 教案（表格式）.doc',
    '人教版数学六年级上册3.1 倒数的认识 表格式教案.doc',
    '人教版数学六年级上册3.2 分数除以整数 表格式教案.doc',
    '人教版数学六年级上册3.3 一个数除以分数 表格式教案.doc',
    '人教版数学六年级上册3.4 分数混合运算 表格式教案.doc',
    '人教版数学六年级上册3.7 解决问题（2）表格式教案.doc',
]

function Explorer() {
    return (
        <div className="absolute top-[618px] right-0 w-[834px] overflow-hidden bg-white text-black shadow-[0_0_10px_rgba(60,60,80,0.45)] [text-spacing-trim:space-all]">
            <div className="flex h-[31px] items-center bg-[#bbb] pl-2.5">
                <FolderIcon className="h-4 w-3.5" />
                <span className="ml-1.5 h-3 w-px bg-[#888]" />
                <CheckFileIcon className="ml-3 h-4 w-3" />
                <FolderIcon className="ml-2.5 h-4 w-3.5" />
                <UndoIcon className="ml-1.5 h-4 w-3.5" />
                <svg viewBox="0 0 8 7" className="ml-2 h-[7px] w-2"><path d="M1 0h6v1H1zM0 3h8L4 7z" /></svg>
                <span className="ml-2 h-3 w-px bg-[#888]" />
                <span className="ml-1.5">第3单元教案</span>
            </div>
            <div className="-mb-px flex h-[27px]">
                <button className="h-[23px] w-14 bg-[#6d6d6d] text-white">文件</button>
                <button className="relative ml-px w-[51px] border-x border-[#dadae3] bg-[#f6f6f7] pb-0.5">主页</button>
                <button className="w-[54px] pb-0.5">共享</button>
                <button className="w-[54px] pb-0.5">查看</button>
            </div>
            <Ribbon />
            <div className="flex h-[35px] items-center pl-3 text-[#555]">
                <ArrowLeft className="h-3.5 w-3.5" strokeWidth={2.5} />
                <ArrowRight className="ml-4 h-3.5 w-3.5 text-[#cfcfdc]" strokeWidth={2.5} />
                <ChevronDown className="ml-3 h-2.5 w-2.5" strokeWidth={3} />
                <ArrowUp className="ml-2 h-4 w-4" strokeWidth={2.5} />
                <div className="ml-[5px] flex h-[23px] flex-1 items-center overflow-hidden border border-r-0 border-[#dadae3] pl-1 whitespace-nowrap text-black">
                    <FolderIcon className="h-4 w-3.5 flex-none" />
                    <span className="mx-2 text-[#555]">«</span>
                    {crumbs.map((name, i) => <span key={name} className="flex flex-none items-center">
                        {i > 0 && <ChevronRight className="mx-2 h-2.5 w-2.5 text-[#666]" strokeWidth={2.5} />}
                        <button>{name}</button>
                    </span>)}
                </div>
            </div>
            <div className="flex">
                <ul className="w-[187px] flex-none pb-[25px]">
                    {places.map(({ name, icon: Icon, selected, root }, i) => <li key={i} className={root ? 'pt-2' : ''}>
                        <button className={`flex h-6 w-full items-center gap-[5px] ${root ? 'pl-6' : 'pl-8'} ${selected ? 'bg-[#d9d9e4]' : ''}`}><Icon className="h-4 w-4" />{name}</button>
                    </li>)}
                </ul>
                <div className="ml-px flex w-4 flex-none flex-col items-center bg-[#f5f5f7] py-1 text-[#555]">
                    <ChevronUp className="h-3 w-3" strokeWidth={3} />
                    <div className="mt-auto h-[193px] w-[15px] bg-[#c0c0c0]" />
                    <ChevronDown className="mt-1 h-3 w-3" strokeWidth={3} />
                </div>
                <ul className="ml-px w-[522px] flex-none border-l border-[#f0f0f4] pt-1.5 pl-[15px]">
                    {files.map((name, i) => <li key={name}>
                        <button className={`flex h-[21px] w-full items-center gap-1 border pl-1 whitespace-pre ${i === 0 ? 'border-[#9fcff5] bg-[#cff0f9]' : 'border-transparent'}`}>
                            <FileIcon className="h-4 w-3.5 flex-none" solid={name.endsWith('x')} />{name}
                        </button>
                    </li>)}
                </ul>
            </div>
            <div className="flex h-[23px] items-center pl-3.5 text-[#2c3557]">
                <span>20 个项目</span>
                <span className="mx-2.5 h-3 w-px bg-[#e2e2ea]" />
                <span>选中 1 个项目</span>
                <span className="ml-2.5">461 KB</span>
                <span className="mx-2.5 h-3 w-px bg-[#e2e2ea]" />
            </div>
        </div>
    )
}

function Stamp() {
    return (
        <div className="absolute top-[1172px] right-[29px] h-[160px] w-[374px]">
            <svg viewBox="-2 -2 374 160" className="absolute inset-0" fill="#d6232f" stroke="#fff" strokeWidth="2" strokeLinejoin="round">
                <path d="M50 1l60 0 90 1 90-1 56 1q4 4 1 8l-20 1-60 0-70-1-60 1-60 0-26-1q-6-6-1-9Z" />
                <path d="M354 6q6-3 12 0l3 10-1 12-8 0-5-10Z" />
                <path d="M359 31h10l1 60-1 32-4 11h-6l-2-20 2-20-1-38 2-10Z" />
                <path d="M18 15l5-2h28l3 6 20 2 6-4 44-1 10 4 22 1 12-4 40 1 18 5 16 1 34-3 5-8 8 0 4 7 30 2 24 0 2 24-1 22 2 30-2 32-3 7h-64l-3-2-4 2H60l-2-2-3 2H18l-1-24-1-38 1-30Z" />
                <path d="M1 25l6 1v18l2 40 2 48 8 2 14 8 16 3 6 4v5l-20-1H1v-60l1-40Z" />
                <path d="M57 145l30 1 60-2 42 1 5 3-1 6-60 1-50-1-25 0q-4-5-1-9Z" />
                <path d="M201 145l20-1 20 1-1 9-30 0-9-2Z" />
                <path d="M244 145q5-4 12-3l6 3 14 0v8l-20 1-12-2Z" />
                <path d="M294 147q8-4 15-1l1 6q-7 3-13 2l-4-2Z" />
                <path d="M328 143q5-5 9 0v7q-4 2-8 0Z" />
            </svg>
            <div className="relative flex gap-3 pt-7 pl-[38px] text-[60px] leading-[92px] font-bold text-[#eeff00] italic [-webkit-text-stroke:7px_#000] [paint-order:stroke_fill]">
                <span>打</span><span>包</span><span>下</span><span>载</span>
            </div>
        </div>
    )
}

export default function App() {
    return (
        <div className="relative flex h-screen flex-col overflow-hidden bg-[#e4dde5] font-['Open_Sans','Noto_Sans_CJK_SC',sans-serif] text-xs text-[#2b2b2e]">
            <TitleBar />
            <MenuBar />
            <div className="flex min-h-0 flex-1">
                <Documents />
                <SideTools />
            </div>
            <StatusBar />
            <Explorer />
            <Stamp />
        </div>
    )
}
